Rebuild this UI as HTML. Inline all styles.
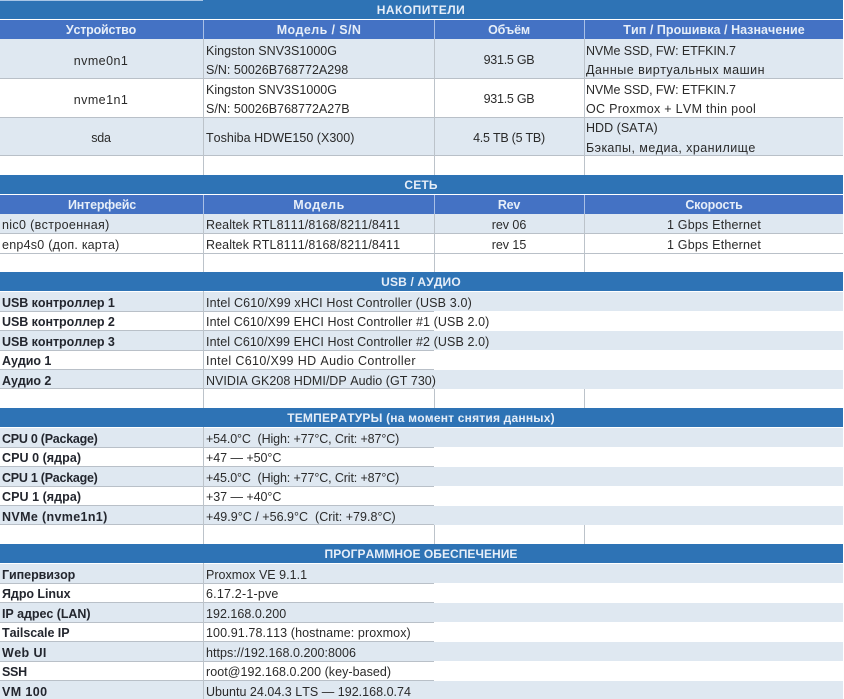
<!DOCTYPE html>
<html lang="ru"><head><meta charset="utf-8"><title>Hardware</title>
<style>
html,body{margin:0;padding:0;background:#fff}
#p{position:relative;width:844px;height:699px;overflow:hidden;background:#fff;font-family:"Liberation Sans","DejaVu Sans",sans-serif;font-size:12.5px;letter-spacing:-.05px;color:#2a2a2a;font-kerning:none;filter:blur(.3px)}
#p div{position:absolute}
.s{left:0;width:843px;background:#2e73b5}
.h{left:0;width:843px;background:#4472c4}
.z{left:0;width:843px;background:#dfe8f1}
.f{left:0;width:843px;height:1px;background:#b9c0c8}
.g{left:0;width:434px;height:1px;background:#b9c0c8}
.v{width:1px;background:#bcc3ca}
.w{width:1px;background:#a9c0e6}
.t{height:20px;line-height:20px;white-space:pre;margin-top:.5px}
.c{text-align:center;transform:translateX(-50%);letter-spacing:-.25px}
.a{left:2px}.m{left:206px}.q{left:586px}
.b{font-weight:bold;color:#23262e;letter-spacing:-.05px}
.r{letter-spacing:.35px}
.n{letter-spacing:.4px}
.e{letter-spacing:.02px}
.u{letter-spacing:-.22px}
.i{letter-spacing:.2px}
.x{font-weight:bold;color:#e6eef8;text-align:center;transform:translateX(-50%);height:20px;line-height:20px;white-space:pre;letter-spacing:-.2px}
.y{left:421px;font-size:12px;letter-spacing:.15px}
</style></head><body><div id="p">
<div class="s" style="top:0;height:19px"></div>
<div style="left:0;top:0;width:203px;height:1px;background:#a8c6e6"></div>
<div class="h" style="top:20px;height:19px"></div>
<div class="z" style="top:39px;height:39px"></div>
<div class="z" style="top:117px;height:38px"></div>
<div class="s" style="top:175px;height:19px"></div>
<div class="h" style="top:195px;height:19px"></div>
<div class="z" style="top:214px;height:19px"></div>
<div class="s" style="top:272px;height:19px"></div>
<div class="z" style="top:292px;height:19px"></div>
<div class="z" style="top:331px;height:19px"></div>
<div class="z" style="top:370px;height:19px"></div>
<div class="s" style="top:408px;height:19px"></div>
<div class="z" style="top:428px;height:19px"></div>
<div class="z" style="top:467px;height:19px"></div>
<div class="z" style="top:506px;height:19px"></div>
<div class="s" style="top:544px;height:19px"></div>
<div class="z" style="top:564px;height:19px"></div>
<div class="z" style="top:603px;height:19px"></div>
<div class="z" style="top:642px;height:19px"></div>
<div class="z" style="top:681px;height:18px"></div>

<div class="f" style="top:78px"></div><div class="f" style="top:117px"></div><div class="f" style="top:155px"></div>
<div class="f" style="top:233px"></div><div class="f" style="top:253px"></div>
<div class="g" style="top:311px"></div><div class="g" style="top:330px"></div><div class="g" style="top:350px"></div><div class="g" style="top:369px"></div><div class="g" style="top:388px"></div>
<div class="g" style="top:447px"></div><div class="g" style="top:466px"></div><div class="g" style="top:486px"></div><div class="g" style="top:505px"></div><div class="g" style="top:524px"></div>
<div class="g" style="top:583px"></div><div class="g" style="top:602px"></div><div class="g" style="top:622px"></div><div class="g" style="top:641px"></div><div class="g" style="top:661px"></div><div class="g" style="top:680px"></div>

<div class="w" style="left:203px;top:20px;height:19px"></div><div class="w" style="left:434px;top:20px;height:19px"></div><div class="w" style="left:584px;top:20px;height:19px"></div>
<div class="w" style="left:203px;top:195px;height:19px"></div><div class="w" style="left:434px;top:195px;height:19px"></div><div class="w" style="left:584px;top:195px;height:19px"></div>
<div class="v" style="left:203px;top:39px;height:136px"></div><div class="v" style="left:434px;top:39px;height:136px"></div><div class="v" style="left:584px;top:39px;height:136px"></div>
<div class="v" style="left:203px;top:214px;height:58px"></div><div class="v" style="left:434px;top:214px;height:58px"></div><div class="v" style="left:584px;top:214px;height:58px"></div>
<div class="v" style="left:203px;top:291px;height:117px"></div><div class="v" style="left:434px;top:389px;height:19px"></div><div class="v" style="left:584px;top:389px;height:19px"></div>
<div class="v" style="left:203px;top:427px;height:117px"></div><div class="v" style="left:434px;top:525px;height:19px"></div><div class="v" style="left:584px;top:525px;height:19px"></div>
<div class="v" style="left:203px;top:563px;height:136px"></div>

<div class="x y" style="top:0;letter-spacing:.5px">НАКОПИТЕЛИ</div>
<div class="x" style="left:101px;top:20px">Устройство</div>
<div class="x" style="left:319px;top:20px;letter-spacing:.4px">Модель / S/N</div>
<div class="x" style="left:509px;top:20px">Объём</div>
<div class="x" style="left:714px;top:20px;letter-spacing:.05px">Тип / Прошивка / Назначение</div>

<div class="t c n" style="left:101px;top:50px;letter-spacing:.45px">nvme0n1</div>
<div class="t m e" style="top:40px">Kingston SNV3S1000G</div>
<div class="t m e" style="top:59px">S/N: 50026B768772A298</div>
<div class="t c" style="left:509px;top:49px">931.5 GB</div>
<div class="t q e" style="top:40px;letter-spacing:-.1px">NVMe SSD, FW: ETFKIN.7</div>
<div class="t q" style="top:59px;letter-spacing:.5px">Данные виртуальных машин</div>

<div class="t c n" style="left:101px;top:89px;letter-spacing:.45px">nvme1n1</div>
<div class="t m e" style="top:79px">Kingston SNV3S1000G</div>
<div class="t m e" style="top:98px">S/N: 50026B768772A27B</div>
<div class="t c" style="left:509px;top:88px">931.5 GB</div>
<div class="t q e" style="top:79px;letter-spacing:-.1px">NVMe SSD, FW: ETFKIN.7</div>
<div class="t q" style="top:98px;letter-spacing:.3px">ОС Proxmox + LVM thin pool</div>

<div class="t c" style="left:101px;top:127px">sda</div>
<div class="t m e" style="top:127px">Toshiba HDWE150 (X300)</div>
<div class="t c" style="left:509px;top:127px">4.5 TB (5 TB)</div>
<div class="t q e" style="top:117px">HDD (SATA)</div>
<div class="t q" style="top:137px;letter-spacing:.45px">Бэкапы, медиа, хранилище</div>

<div class="x y" style="top:175px">СЕТЬ</div>
<div class="x" style="left:102px;top:195px">Интерфейс</div>
<div class="x" style="left:319px;top:195px;letter-spacing:.5px">Модель</div>
<div class="x" style="left:509px;top:195px">Rev</div>
<div class="x" style="left:714px;top:195px">Скорость</div>

<div class="t a r" style="top:214px">nic0 (встроенная)</div>
<div class="t m" style="top:214px;letter-spacing:.1px">Realtek RTL8111/8168/8211/8411</div>
<div class="t c" style="left:509px;top:214px;letter-spacing:-.05px">rev 06</div>
<div class="t c" style="left:714px;top:214px;letter-spacing:.2px">1 Gbps Ethernet</div>
<div class="t a r" style="top:234px;letter-spacing:.25px">enp4s0 (доп. карта)</div>
<div class="t m" style="top:234px;letter-spacing:.1px">Realtek RTL8111/8168/8211/8411</div>
<div class="t c" style="left:509px;top:234px;letter-spacing:-.05px">rev 15</div>
<div class="t c" style="left:714px;top:234px;letter-spacing:.2px">1 Gbps Ethernet</div>

<div class="x y" style="top:272px">USB / АУДИО</div>
<div class="t a b" style="top:292px">USB контроллер 1</div><div class="t m" style="top:292px;letter-spacing:.15px">Intel C610/X99 xHCI Host Controller (USB 3.0)</div>
<div class="t a b" style="top:311px">USB контроллер 2</div><div class="t m" style="top:311px;letter-spacing:.1px">Intel C610/X99 EHCI Host Controller #1 (USB 2.0)</div>
<div class="t a b" style="top:331px">USB контроллер 3</div><div class="t m" style="top:331px;letter-spacing:.1px">Intel C610/X99 EHCI Host Controller #2 (USB 2.0)</div>
<div class="t a b" style="top:350px">Аудио 1</div><div class="t m" style="top:350px;letter-spacing:.37px">Intel C610/X99 HD Audio Controller</div>
<div class="t a b" style="top:370px">Аудио 2</div><div class="t m e" style="top:370px">NVIDIA GK208 HDMI/DP Audio (GT 730)</div>

<div class="x y" style="top:408px;letter-spacing:.2px">ТЕМПЕРАТУРЫ (на момент снятия данных)</div>
<div class="t a b u" style="top:428px;letter-spacing:-.25px">CPU 0 (Package)</div><div class="t m u" style="top:428px;letter-spacing:-.12px">+54.0°C  (High: +77°C, Crit: +87°C)</div>
<div class="t a b" style="top:447px;letter-spacing:.05px">CPU 0 (ядра)</div><div class="t m" style="top:447px">+47 — +50°C</div>
<div class="t a b u" style="top:467px;letter-spacing:-.25px">CPU 1 (Package)</div><div class="t m u" style="top:467px;letter-spacing:-.12px">+45.0°C  (High: +77°C, Crit: +87°C)</div>
<div class="t a b" style="top:486px;letter-spacing:.05px">CPU 1 (ядра)</div><div class="t m" style="top:486px">+37 — +40°C</div>
<div class="t a b" style="top:506px;letter-spacing:.35px">NVMe (nvme1n1)</div><div class="t m" style="top:506px;letter-spacing:.02px">+49.9°C / +56.9°C  (Crit: +79.8°C)</div>

<div class="x y" style="top:544px;letter-spacing:.05px">ПРОГРАММНОЕ ОБЕСПЕЧЕНИЕ</div>
<div class="t a b" style="top:564px">Гипервизор</div><div class="t m e" style="top:564px">Proxmox VE 9.1.1</div>
<div class="t a b" style="top:583px">Ядро Linux</div><div class="t m i" style="top:583px">6.17.2-1-pve</div>
<div class="t a b" style="top:603px">IP адрес (LAN)</div><div class="t m e" style="top:603px">192.168.0.200</div>
<div class="t a b" style="top:622px">Tailscale IP</div><div class="t m i" style="top:622px;letter-spacing:.1px">100.91.78.113 (hostname: proxmox)</div>
<div class="t a b" style="top:642px;letter-spacing:.4px">Web UI</div><div class="t m i" style="top:642px;letter-spacing:.05px">https://192.168.0.200:8006</div>
<div class="t a b" style="top:661px;letter-spacing:-.3px">SSH</div><div class="t m i" style="top:661px;letter-spacing:.05px">root@192.168.0.200 (key-based)</div>
<div class="t a b" style="top:681px;letter-spacing:.4px">VM 100</div><div class="t m e" style="top:681px">Ubuntu 24.04.3 LTS — 192.168.0.74</div>
</div></body></html>
